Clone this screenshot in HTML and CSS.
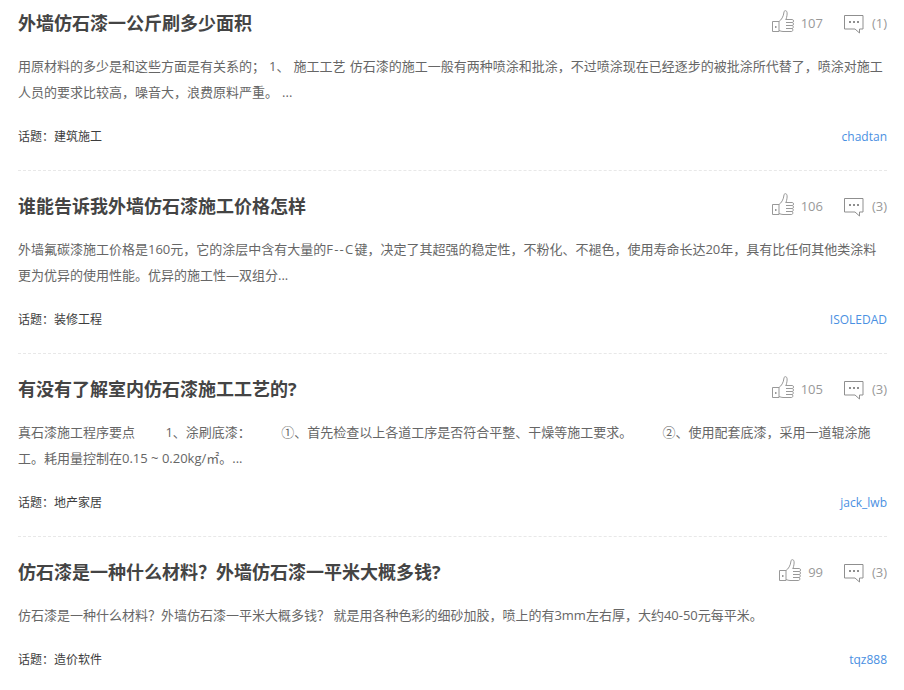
FILE: index.html
```html
<!DOCTYPE html>
<html lang="zh-CN">
<head>
<meta charset="utf-8">
<title>外墙仿石漆</title>
<link rel="stylesheet" href="styles.css">
</head>
<body>
<svg class="defs" width="0" height="0" aria-hidden="true">
  <symbol id="thumb" viewBox="0 0 22 22">
    <path d="M.5 11.500h6.500v10h-6.500z" fill="none" stroke="#999"/>
    <path d="M7 11.500c2.300-1.500 4.600-5 5-9.500 .1-1.700 2.600-1.900 3 .2 .4 2.300-.3 5-1 7.300h-.5" fill="none" stroke="#999"/>
    <path d="M14 9.500h6.500c1.300 0 1.300 3 0 3h-6.500 M20.500 12.500c1.200 0 1.200 3 0 3h-6.500 M20.500 15.500c1 0 1 3-.2 3h-6.300 M20.300 18.500c.8 0 .8 3-.6 3h-8.700c-1.400 0-2.500-.5-4-1" fill="none" stroke="#999"/>
    <rect x="3" y="16" width="1.500" height="2" fill="#999"/>
  </symbol>
  <symbol id="bubble" viewBox="0 0 20 20">
    <path d="M.5 1.500h18.500v13.500h-3.500v4l-4.500-4h-10.500z" fill="none" stroke="#8f8f8f"/>
    <rect x="5" y="7" width="2" height="2" fill="#8f8f8f"/>
    <rect x="9" y="7" width="2" height="2" fill="#8f8f8f"/>
    <rect x="13" y="7" width="2" height="2" fill="#8f8f8f"/>
  </symbol>
</svg>
<main class="list">
  <article class="item">
    <header class="head">
      <h2 class="title">外墙仿石漆一公斤刷多少面积</h2>
      <div class="stats">
        <svg class="ico-thumb"><use href="#thumb"/></svg><span class="num">107</span>
        <svg class="ico-bubble"><use href="#bubble"/></svg><span class="cnt">(1)</span>
      </div>
    </header>
    <p class="text loose">用原材料的多少是和这些方面是有关系的； 1、 施工工艺 仿石漆的施工一般有两种喷涂和批涂，不过喷涂现在已经逐步的被批涂所代替了，喷涂对施工人员的要求比较高，噪音大，浪费原料严重。 ...</p>
    <footer class="foot"><span class="topic">话题：建筑施工</span><a class="user">chadtan</a></footer>
  </article>
  <article class="item">
    <header class="head">
      <h2 class="title">谁能告诉我外墙仿石漆施工价格怎样</h2>
      <div class="stats">
        <svg class="ico-thumb"><use href="#thumb"/></svg><span class="num">106</span>
        <svg class="ico-bubble"><use href="#bubble"/></svg><span class="cnt">(3)</span>
      </div>
    </header>
    <p class="text">外墙氟碳漆施工价格是160元，它的涂层中含有大量的<span class="wide">F--C</span>键，决定了其超强的稳定性，不粉化、不褪色，使用寿命长达20年，具有比任何其他类涂料更为优异的使用性能。优异的施工性—双组分...</p>
    <footer class="foot"><span class="topic">话题：装修工程</span><a class="user">ISOLEDAD</a></footer>
  </article>
  <article class="item">
    <header class="head">
      <h2 class="title">有没有了解室内仿石漆施工工艺的?</h2>
      <div class="stats">
        <svg class="ico-thumb"><use href="#thumb"/></svg><span class="num">105</span>
        <svg class="ico-bubble"><use href="#bubble"/></svg><span class="cnt">(3)</span>
      </div>
    </header>
    <p class="text">真石漆施工程序要点&nbsp;&nbsp;&nbsp;&nbsp;&nbsp;&nbsp;&nbsp;&nbsp;&nbsp;1、涂刷底漆：&nbsp;&nbsp;&nbsp;&nbsp;&nbsp;&nbsp;&nbsp;&nbsp;&nbsp;①、首先检查以上各道工序是否符合平整、干燥等施工要求。&nbsp;&nbsp;&nbsp;&nbsp;&nbsp;&nbsp;&nbsp;&nbsp;&nbsp;②、使用配套底漆，采用一道辊涂施工。耗用量控制在0.15 ~ 0.20kg/㎡。...</p>
    <footer class="foot"><span class="topic">话题：地产家居</span><a class="user">jack_lwb</a></footer>
  </article>
  <article class="item">
    <header class="head">
      <h2 class="title">仿石漆是一种什么材料？外墙仿石漆一平米大概多钱?</h2>
      <div class="stats">
        <svg class="ico-thumb"><use href="#thumb"/></svg><span class="num">99</span>
        <svg class="ico-bubble"><use href="#bubble"/></svg><span class="cnt">(3)</span>
      </div>
    </header>
    <p class="text">仿石漆是一种什么材料？外墙仿石漆一平米大概多钱？ 就是用各种色彩的细砂加胶，喷上的有3mm左右厚，大约40-50元每平米。</p>
    <footer class="foot"><span class="topic">话题：造价软件</span><a class="user">tqz888</a></footer>
  </article>
</main>
</body>
</html>
```
FILE: styles.css
```css
html, body {
  margin: 0;
  padding: 0;
  background: #fff;
  overflow: hidden;
}
body {
  height: 690px;
  font-family: "Open Sans", "Noto Sans CJK SC", sans-serif;
  color: #333;
}
.defs { position: absolute; }
.list { padding: 7px 17px 0 18px; }
.item {
  padding-bottom: 21px;
  margin-bottom: 19px;
  border-bottom: 1px dashed #e8e8e8;
}
.item:last-child { border-bottom: 0; }
.head {
  display: flex;
  justify-content: space-between;
  align-items: center;
  height: 32px;
}
.title {
  margin: 0;
  font-size: 18px;
  font-weight: 700;
  line-height: 32px;
  color: #444;
}
.stats {
  display: flex;
  align-items: center;
  font-size: 13px;
  color: #999;
}
.ico-thumb { width: 22px; height: 22px; margin-right: 7px; margin-top: -5px; }
.ico-bubble { width: 20px; height: 20px; margin-left: 21px; margin-right: 8px; margin-top: 1px; }
.cnt { width: 15px; text-align: right; }
.text {
  margin: 14px 0 0;
  font-size: 13px;
  line-height: 26px;
  color: #666;
}
.loose { word-spacing: 0.7px; }
.wide { letter-spacing: 1.2px; }
.foot {
  display: flex;
  justify-content: space-between;
  align-items: center;
  margin-top: 18px;
  height: 26px;
  font-size: 12px;
}
.topic { color: #3c3c3c; }
.user {
  color: #4a90e2;
  font-size: 12px;
}
```
